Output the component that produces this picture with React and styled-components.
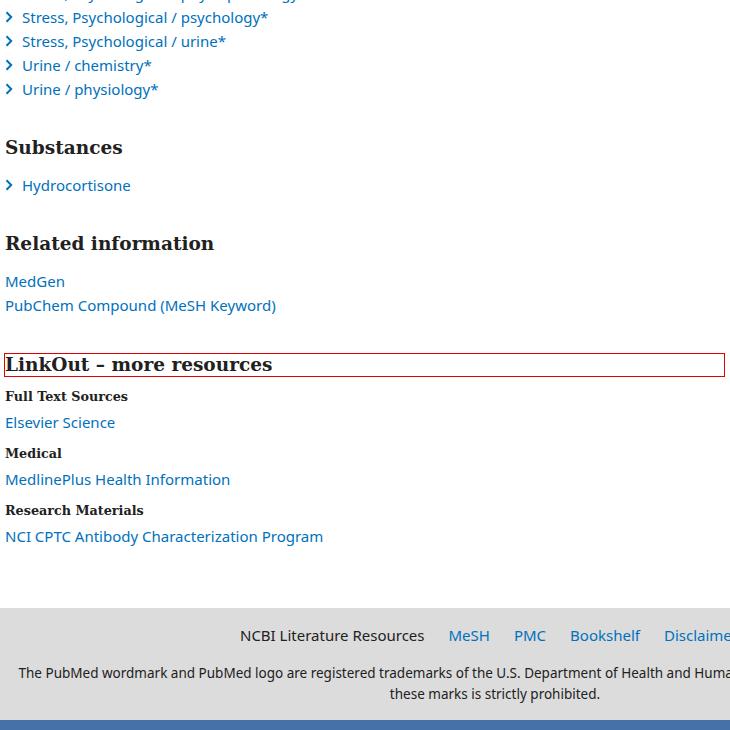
import React from 'react'
import styled, { createGlobalStyle } from 'styled-components'

const GlobalStyle = createGlobalStyle`
  html, body {
    margin: 0;
    padding: 0;
    overflow: hidden;
    background: #fff;
  }
  body {
    font-family: "Noto Sans", "Open Sans", sans-serif;
    color: #212121;
  }
`

const meshTerms = [
  'Stress, Psychological / physiopathology*',
  'Stress, Psychological / psychology*',
  'Stress, Psychological / urine*',
  'Urine / chemistry*',
  'Urine / physiology*',
]

const linkOut = [
  { category: 'Full Text Sources', links: ['Elsevier Science'] },
  { category: 'Medical', links: ['MedlinePlus Health Information'] },
  { category: 'Research Materials', links: ['NCI CPTC Antibody Characterization Program'] },
]

const footerLinks = ['MeSH', 'PMC', 'Bookshelf', 'Disclaimer']

const Chevron = () =>
  <ChevronSvg viewBox="0 0 8 12" width="8" height="12">
    <polyline points="1.5,1.2 6.2,6 1.5,10.8" fill="none" stroke="currentColor" strokeWidth="2" />
  </ChevronSvg>

export default function App() {
  return (
    <>
      <GlobalStyle />
      <Main>
        <KeywordList>
          {meshTerms.map(term =>
            <Keyword key={term}>
              <Chevron />
              <Link>{term}</Link>
            </Keyword>
          )}
        </KeywordList>

        <Section>
          <Heading>Substances</Heading>
          <KeywordList>
            <Keyword>
              <Chevron />
              <Link>Hydrocortisone</Link>
            </Keyword>
          </KeywordList>
        </Section>

        <Section>
          <Heading>Related information</Heading>
          <PlainList>
            <Link>MedGen</Link>
            <Link>PubChem Compound (MeSH Keyword)</Link>
          </PlainList>
        </Section>

        <Section $gap={36}>
          <Heading $outlined>LinkOut – more resources</Heading>
          {linkOut.map(group =>
            <Group key={group.category}>
              <Category>{group.category}</Category>
              {group.links.map(l => <Link key={l}>{l}</Link>)}
            </Group>
          )}
        </Section>
      </Main>

      <Footer>
        <FooterInner>
          <FooterNav>
            <FooterLabel>NCBI Literature Resources</FooterLabel>
            {footerLinks.map(l => <FooterLink key={l}>{l}</FooterLink>)}
          </FooterNav>
          <Trademark>
            The PubMed wordmark and PubMed logo are registered trademarks of the U.S. Department of Health and Human Services (HHS). Unauthorized use of these marks is strictly prohibited.
          </Trademark>
        </FooterInner>
      </Footer>
      <BottomBar />
    </>
  )
}

const Main = styled.main`
  padding: 0 5px;
  margin-top: -19px;
  height: 627px;
  box-sizing: border-box;
`

const KeywordList = styled.ul`
  list-style: none;
  margin: 0;
  padding: 0;
`

const Keyword = styled.li`
  display: flex;
  align-items: center;
  height: 24px;
  color: #0071bc;
`

const ChevronSvg = styled.svg`
  margin: 0 9px 0 0;
  flex-shrink: 0;
`

const Link = styled.a`
  color: #0071bc;
  font-size: 15px;
  line-height: 24px;
  text-decoration: none;
  cursor: pointer;
`

const Section = styled.section`
  margin-top: ${p => p.$gap || 35}px;
`

const Heading = styled.h2`
  font-family: "DejaVu Serif", serif;
  font-weight: bold;
  font-size: 18.5px;
  line-height: 22px;
  margin: 0 0 ${p => p.$outlined ? '10px' : '13px'} -1px;
  color: #212121;
  border: 1px solid ${p => p.$outlined ? '#e00000' : 'transparent'};
`

const PlainList = styled.div`
  display: flex;
  flex-direction: column;
`

const Group = styled.div`
  display: flex;
  flex-direction: column;
  margin-bottom: 10px;
`

const Category = styled.h3`
  font-family: "DejaVu Serif", serif;
  font-weight: bold;
  font-size: 12.75px;
  line-height: 20px;
  margin: 0 0 3px;
  color: #212121;
`

const Footer = styled.footer`
  background: #dcdcdc;
  height: 112px;
  overflow: hidden;
`

const FooterInner = styled.div`
  width: 990px;
  padding: 17px 15px 0;
  box-sizing: border-box;
  text-align: center;
`

const FooterNav = styled.nav`
  display: flex;
  justify-content: center;
  gap: 24px;
  padding-right: 12px;
  font-size: 15px;
  line-height: 20px;
`

const FooterLabel = styled.span`
  color: #212121;
`

const FooterLink = styled.a`
  color: #0071bc;
  cursor: pointer;
`

const Trademark = styled.p`
  margin: 18px 0 0;
  font-size: 13.5px;
  line-height: 21px;
  color: #212121;
`

const BottomBar = styled.div`
  background: #4571a8;
  height: 40px;
`
